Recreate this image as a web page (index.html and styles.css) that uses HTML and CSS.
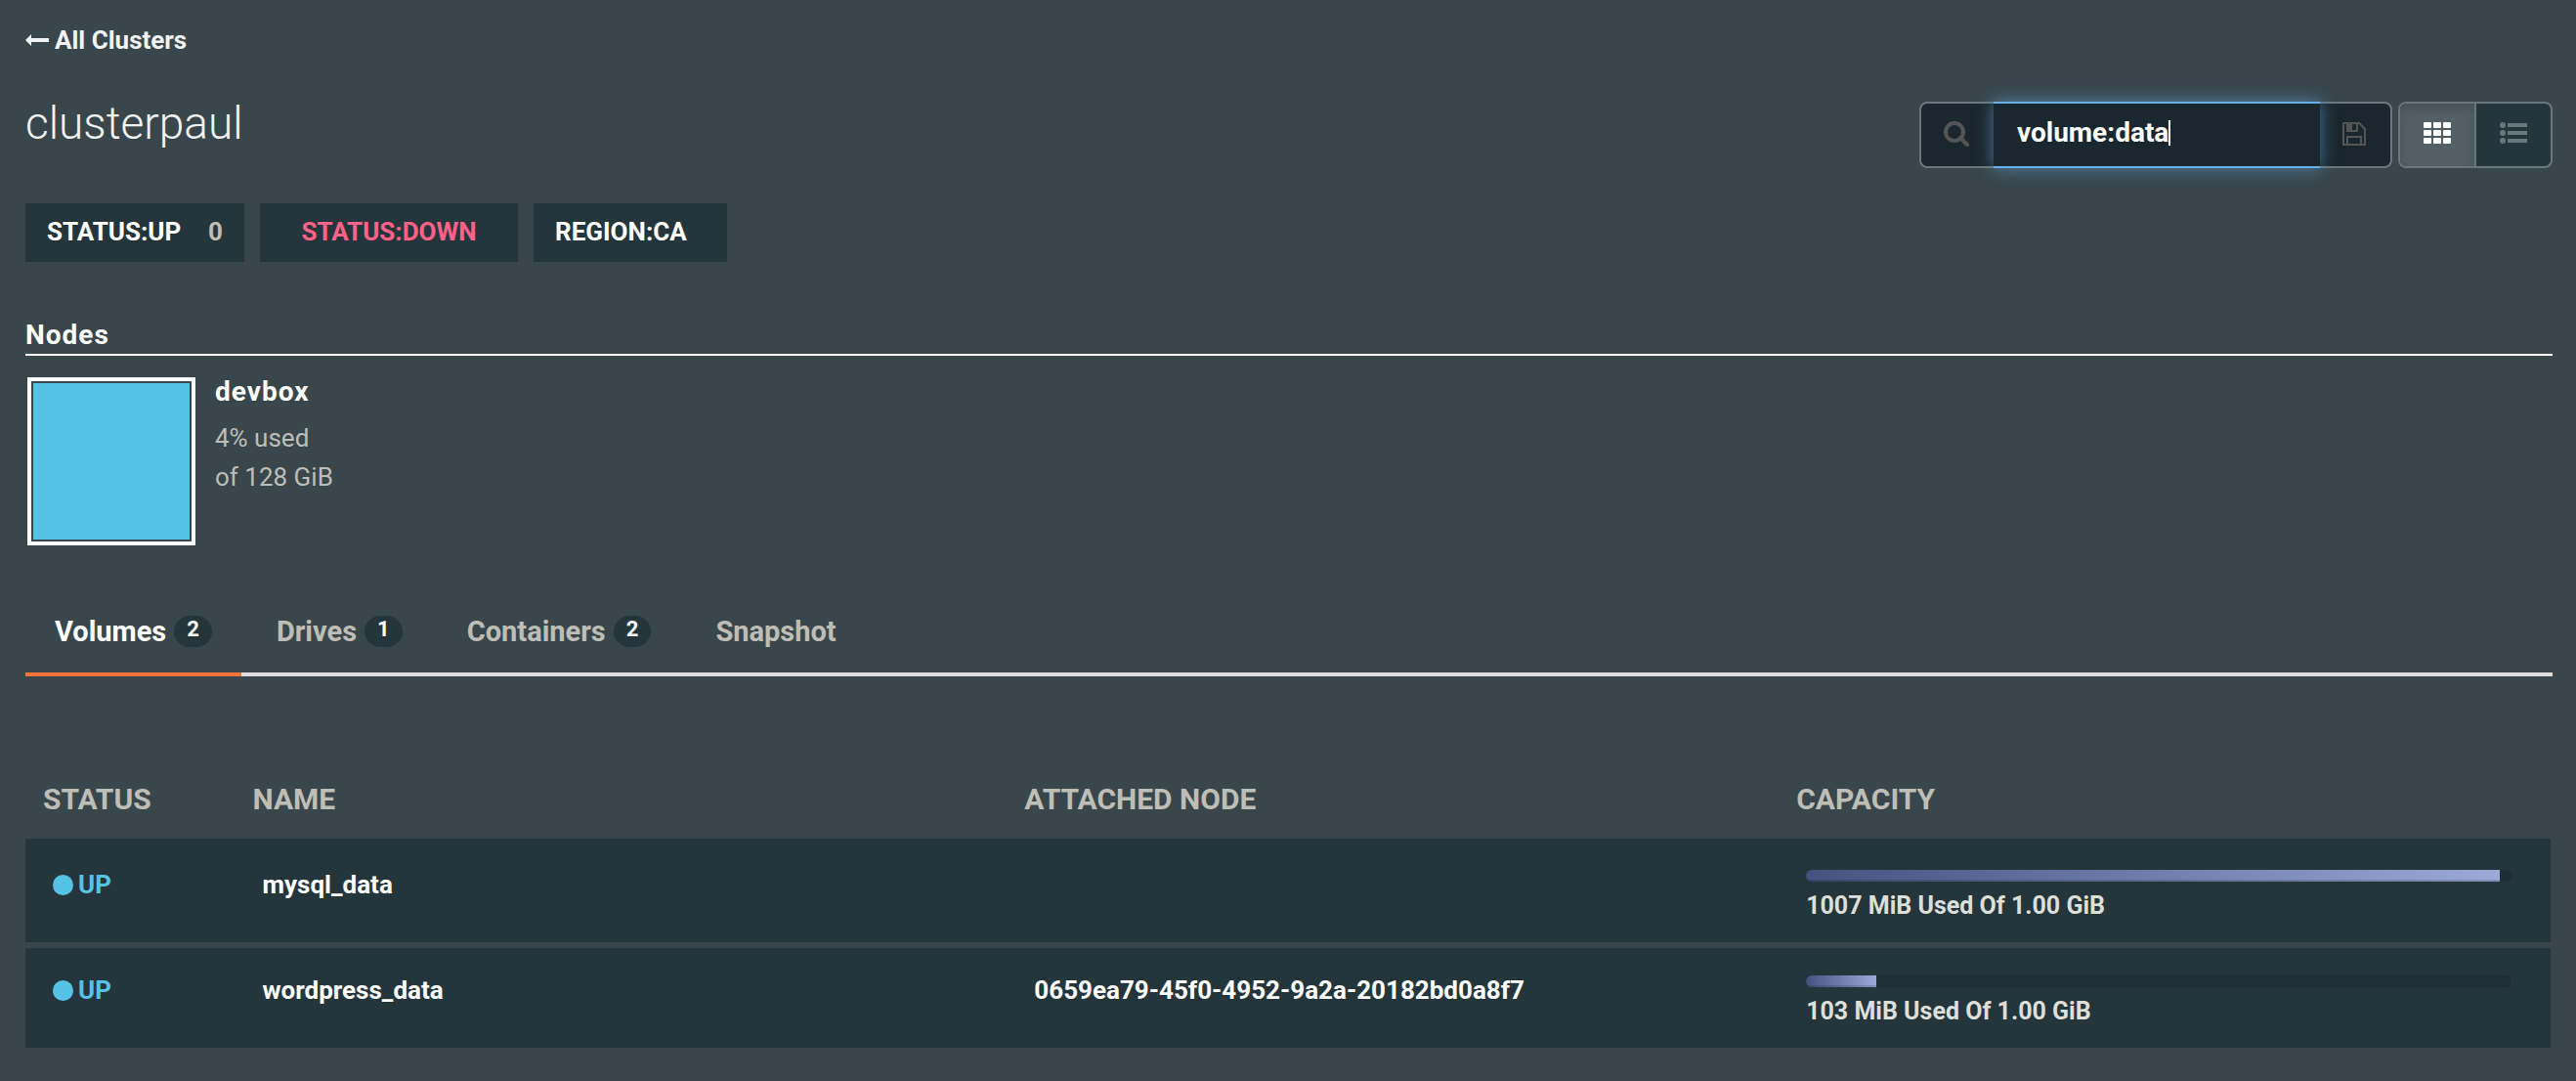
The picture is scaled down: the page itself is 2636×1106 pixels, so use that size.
FILE: index.html
```html
<!DOCTYPE html>
<html lang="en">
<head>
<meta charset="utf-8">
<title>clusterpaul</title>
<link rel="stylesheet" href="styles.css">
</head>
<body>
<main class="page">
  <a class="back" href="#clusters">
    <svg class="back-arrow" viewBox="0 0 24 12" aria-hidden="true"><path d="M0 6 6 0V4H24V8H6V12Z" fill="currentColor"/></svg>
    All Clusters
  </a>
  <header class="head">
    <h1 class="title">clusterpaul</h1>
    <div class="tools">
      <form class="search">
        <button class="search-btn" type="submit" aria-label="Search">
          <svg class="icon-search" viewBox="0 0 26 26" aria-hidden="true"><circle cx="11" cy="11" r="9" fill="none" stroke="currentColor" stroke-width="4"/><path d="m17 17 7 7" stroke="currentColor" stroke-width="4" stroke-linecap="round"/></svg>
        </button>
        <div class="field">
          <input class="field-input" type="text" value="volume:data" size="9" aria-label="Filter">
          <span class="caret"></span>
        </div>
        <button class="save-btn" type="button" aria-label="Save search">
          <svg class="icon-save" viewBox="0 0 24 24" aria-hidden="true"><path d="M1 1H17L23 7V23H1ZM5 1V9H15V1M5 23V15H19V23" fill="none" stroke="currentColor" stroke-width="2"/><path d="M5 1H10V9H5Z" fill="currentColor"/></svg>
        </button>
      </form>
      <div class="views">
        <button class="view view-on" type="button" aria-label="Grid view">
          <svg class="icon-grid" viewBox="0 0 28 22" aria-hidden="true" fill="currentColor"><rect width="8" height="6" rx="1"/><rect x="10" width="8" height="6" rx="1"/><rect x="20" width="8" height="6" rx="1"/><rect y="8" width="8" height="6" rx="1"/><rect x="10" y="8" width="8" height="6" rx="1"/><rect x="20" y="8" width="8" height="6" rx="1"/><rect y="16" width="8" height="6" rx="1"/><rect x="10" y="16" width="8" height="6" rx="1"/><rect x="20" y="16" width="8" height="6" rx="1"/></svg>
        </button>
        <button class="view" type="button" aria-label="List view">
          <svg class="icon-grid" viewBox="0 0 28 22" aria-hidden="true" fill="currentColor"><circle cx="3" cy="3" r="3"/><circle cx="3" cy="11" r="3"/><circle cx="3" cy="19" r="3"/><path d="M8 1H28V5H8ZM8 9H28V13H8ZM8 17H28V21H8Z"/></svg>
        </button>
      </div>
    </div>
  </header>
  <div class="tags">
    <button class="tag tag-up" type="button">STATUS:UP <span class="tag-count">0</span></button>
    <button class="tag tag-down" type="button">STATUS:DOWN</button>
    <button class="tag tag-region" type="button">REGION:CA</button>
  </div>
  <h2 class="section">Nodes</h2>
  <div class="node">
    <div class="node-box"></div>
    <div class="node-info">
      <h3 class="node-name">devbox</h3>
      <p class="node-use">4% used<br>of 128 GiB</p>
    </div>
  </div>
  <nav class="tabs">
    <a class="tab tab-on" href="#volumes">Volumes <span class="badge">2</span></a>
    <a class="tab" href="#drives">Drives <span class="badge">1</span></a>
    <a class="tab" href="#containers">Containers <span class="badge">2</span></a>
    <a class="tab" href="#snapshot">Snapshot</a>
  </nav>
  <div class="volumes">
    <table class="table">
      <thead>
        <tr><th class="c-status">STATUS</th><th>NAME</th><th>ATTACHED NODE</th><th>CAPACITY</th></tr>
      </thead>
      <tbody>
        <tr>
          <td><span class="status">UP</span></td>
          <td>mysql_data</td>
          <td></td>
          <td><div class="bar"><div class="fill" style="width:98.4%"></div></div><div class="used">1007 MiB Used Of 1.00 GiB</div></td>
        </tr>
        <tr>
          <td><span class="status">UP</span></td>
          <td>wordpress_data</td>
          <td>0659ea79-45f0-4952-9a2a-20182bd0a8f7</td>
          <td><div class="bar"><div class="fill" style="width:10%"></div></div><div class="used">103 MiB Used Of 1.00 GiB</div></td>
        </tr>
      </tbody>
    </table>
  </div>
</main>
</body>
</html>
```
FILE: styles.css
```css
* { box-sizing: border-box; }
body {
  margin: 0;
  background: #39464c;
  color: #fff;
  font: 700 26px/40px Roboto, "Liberation Sans", sans-serif;
}
h1, h2, h3, p { margin: 0; }
a { color: inherit; text-decoration: none; }
button, input { font: inherit; color: inherit; border: 0; margin: 0; padding: 0; background: none; }
button { display: flex; align-items: center; justify-content: center; }
svg { display: block; }
.page { padding: 21px 24px 34px 26px; }
.back { display: flex; width: max-content; align-items: center; gap: 6px; color: #f2f2f2; }
.back-arrow { width: 24px; height: 12px; }
.head { display: flex; justify-content: space-between; align-items: flex-end; margin-top: 35px; }
.title { align-self: flex-start; font-size: 46px; line-height: 60px; font-weight: 300; color: #f2f2f2; }
.tools { display: flex; gap: 6px; margin-top: 8px; }
.search { display: flex; width: 484px; height: 68px; border: 2px solid #6a777d; border-radius: 8px; background: #1b272e; color: #555; }
.search-btn { width: 74px; padding: 0 2px 2px 0; }
.icon-search { width: 26px; height: 26px; }
.field { display: flex; align-items: center; flex: 1; margin: -2px 0; padding: 0 0 4px 24px; border: 2px solid #66afe9; border-width: 2px 0; background: #1b272e; box-shadow: 0 0 16px rgba(102,175,233,.6); color: #fff; }
.field-input { width: 155px; outline: 0; font-size: 28px; }
.caret { width: 2px; height: 26px; background: #fff; }
.save-btn { width: 72px; padding: 0 2px 2px 0; }
.icon-save { width: 24px; height: 24px; }
.views { display: flex; height: 68px; border: 2px solid #6a777d; border-radius: 8px; overflow: hidden; background: #25353c; }
.view { width: 76px; padding-bottom: 4px; color: #6a777d; }
.view-on { width: 78px; border-right: 2px solid #6a777d; background: #526066; color: #fff; box-shadow: inset 0 6px 10px rgba(0,0,0,.15); }
.icon-grid { width: 28px; height: 22px; }
.tags { display: flex; gap: 16px; margin-top: 36px; }
.tag { height: 60px; background: #25353c; padding: 0 22px 2px; }
.tag-up { width: 224px; justify-content: space-between; }
.tag-count { color: #bebeb6; }
.tag-down { width: 264px; color: #ff6289; }
.tag-region { width: 198px; justify-content: flex-start; }
.section { margin-top: 56px; border-bottom: 2px solid #fff; font-size: 28px; line-height: 38px; letter-spacing: 1px; }
.node { display: flex; gap: 20px; margin: 22px 2px 0; }
.node-box { width: 172px; height: 172px; border: 4px solid #fff; padding: 2px; background: #55c2e6 content-box; }
.node-name { font-size: 28px; line-height: 30px; letter-spacing: 1px; }
.node-use { margin-top: 12px; font-weight: 400; color: #bebeb6; }
.tabs { display: flex; gap: 6px; margin-top: 56px; border-bottom: 4px solid #dcdddc; }
.tab { display: flex; gap: 8px; margin-bottom: -4px; padding: 12px 30px 22px; border-bottom: 4px solid transparent; font-size: 29px; color: #bebeb6; }
.tab-on { border-color: #f3743b; color: #fff; }
.badge { align-self: center; height: 32px; padding: 0 13px; border-radius: 16px; background: #25353c; color: #fff; font-size: 22px; line-height: 28px; }
.volumes { margin: 96px 2px 0 0; }
.table { width: 100%; border-spacing: 0; table-layout: fixed; }
.c-status { width: 8.3%; }
th { padding: 10px 18px 20px; text-align: left; font-size: 30px; color: #bebeb6; }
td { height: 102px; padding: 28px 40px 0 28px; background: #25353c; vertical-align: top; line-height: 30px; white-space: nowrap; }
td:first-child { padding-right: 0; }
tr:first-child td { height: 112px; padding-top: 32px; border-bottom: 6px solid #39464c; }
.status { display: flex; align-items: center; gap: 5px; color: #55c2e6; }
.status::before { content: ""; width: 21px; height: 21px; border-radius: 50%; background: #55c2e6; }
.bar { height: 12px; border-radius: 6px; overflow: hidden; background: #202f36; }
.fill { height: 12px; background: linear-gradient(90deg, #43527f, #9aa9d8); box-shadow: inset 0 -2px 0 rgba(0,0,0,.15); }
.used { margin-top: 10px; font-size: 25px; color: #dedfd8; }
```
